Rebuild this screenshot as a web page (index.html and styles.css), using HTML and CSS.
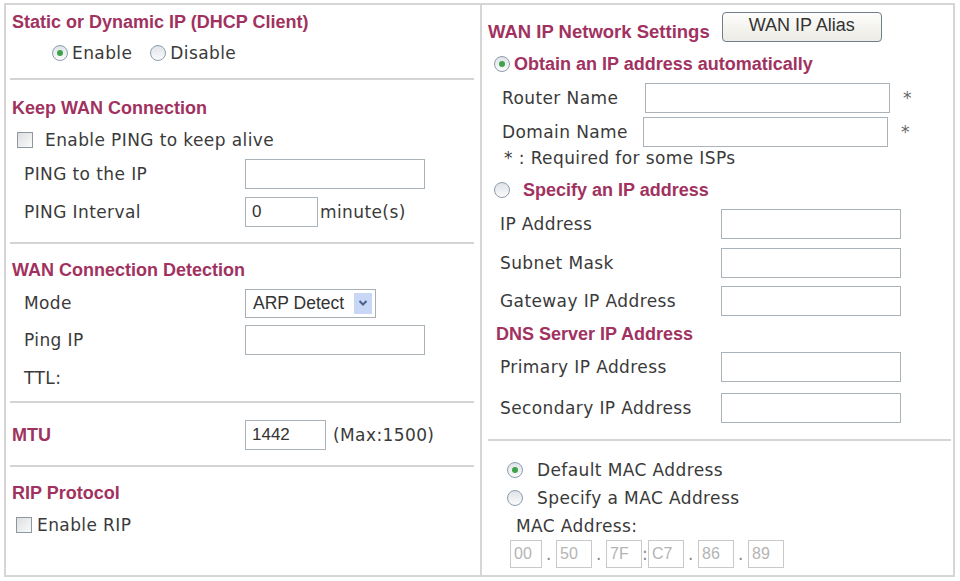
FILE: index.html
```html
<!DOCTYPE html>
<html lang="en">
<head>
  <meta charset="UTF-8"/>
  <title>WAN Settings - DHCP Client</title>
  <link rel="stylesheet" href="styles.css">
</head>
<body>
  <div class="panel">
    <!-- left column: connection options -->
    <div class="col col-left">
      <div class="sec sec-dhcp">
        <div class="title">Static or Dynamic IP (DHCP Client)</div>
        <div class="opts">
          <label class="opt"><span class="radio on"></span>Enable</label>
          <label class="opt"><span class="radio"></span>Disable</label>
        </div>
      </div>
      <hr class="sep">
      <div class="sec sec-keep">
        <div class="title">Keep WAN Connection</div>
        <label class="check-row"><span class="check"></span>Enable PING to keep alive</label>
        <div class="field f-ping">
          <span class="lbl">PING to the IP</span>
          <input type="text" class="inp w180">
        </div>
        <div class="field f-interval">
          <span class="lbl">PING Interval</span>
          <input type="text" class="inp w72" value="0">
          <span class="unit">minute(s)</span>
        </div>
      </div>
      <hr class="sep">
      <div class="sec sec-detect">
        <div class="title">WAN Connection Detection</div>
        <div class="field f-mode">
          <span class="lbl">Mode</span>
          <div class="select">
            <span class="select-val">ARP Detect</span>
            <span class="select-btn">
              <svg width="10" height="8" viewBox="0 0 10 8"><path d="M1.5 2 L5 5.5 L8.5 2" fill="none" stroke="#4a5f8a" stroke-width="2"/></svg>
            </span>
          </div>
        </div>
        <div class="field f-pingip">
          <span class="lbl">Ping IP</span>
          <input type="text" class="inp w180">
        </div>
        <div class="line f-ttl"><span class="lbl">TTL:</span></div>
      </div>
      <hr class="sep">
      <div class="sec sec-mtu">
        <div class="field">
          <span class="lbl title-lbl">MTU</span>
          <input type="text" class="inp w80" value="1442">
          <span class="unit max">(Max:1500)</span>
        </div>
      </div>
      <hr class="sep">
      <div class="sec sec-rip">
        <div class="title">RIP Protocol</div>
        <label class="check-row rip"><span class="check"></span>Enable RIP</label>
      </div>
    </div>

    <!-- right column: WAN IP network settings -->
    <div class="col col-right">
      <div class="sec sec-wan">
        <div class="top-row">
          <div class="title">WAN IP Network Settings</div>
          <button class="btn">WAN IP Alias</button>
        </div>
        <label class="opt opt-title r-obtain"><span class="radio on"></span>Obtain an IP address automatically</label>
        <div class="field f-router">
          <span class="lbl lbl-short">Router Name</span>
          <input type="text" class="inp w244">
          <span class="star">*</span>
        </div>
        <div class="field f-domain">
          <span class="lbl lbl-short">Domain Name</span>
          <input type="text" class="inp w244 nudge">
          <span class="star">*</span>
        </div>
        <div class="line note">* : Required for some ISPs</div>
        <label class="opt opt-title r-specify"><span class="radio"></span>Specify an IP address</label>
        <div class="field f-ip">
          <span class="lbl">IP Address</span>
          <input type="text" class="inp w180">
        </div>
        <div class="field f-mask">
          <span class="lbl">Subnet Mask</span>
          <input type="text" class="inp w180">
        </div>
        <div class="field f-gw">
          <span class="lbl">Gateway IP Address</span>
          <input type="text" class="inp w180">
        </div>
        <div class="title dns">DNS Server IP Address</div>
        <div class="field f-dns1">
          <span class="lbl">Primary IP Address</span>
          <input type="text" class="inp w180">
        </div>
        <div class="field f-dns2">
          <span class="lbl">Secondary IP Address</span>
          <input type="text" class="inp w180">
        </div>
      </div>
      <hr class="sep sep-right">
      <div class="sec sec-mac">
        <label class="opt r-mac1"><span class="radio on"></span>Default MAC Address</label>
        <label class="opt r-mac2"><span class="radio"></span>Specify a MAC Address</label>
        <div class="line mac-lbl">MAC Address:</div>
        <div class="mac">
          <input type="text" class="mac-box first" value="00" disabled>
          <span class="mac-sep">.</span>
          <input type="text" class="mac-box" value="50" disabled>
          <span class="mac-sep">.</span>
          <input type="text" class="mac-box" value="7F" disabled>
          <span class="mac-sep colon">:</span>
          <input type="text" class="mac-box" value="C7" disabled>
          <span class="mac-sep">.</span>
          <input type="text" class="mac-box" value="86" disabled>
          <span class="mac-sep">.</span>
          <input type="text" class="mac-box" value="89" disabled>
        </div>
      </div>
    </div>
  </div>
</body>
</html>
```

FILE: styles.css
```css
body {
  margin: 0;
  background: #fff;
  font-family: "DejaVu Sans", Verdana, sans-serif;
  font-size: 17px;
  letter-spacing: 0.4px;
  color: #3a3a3a;
}
.panel {
  margin: 3px 0 0 4px;
  width: 951px;
  height: 574px;
  box-sizing: border-box;
  border: 2px solid #d6d6d6;
  display: grid;
  grid-template-columns: 476px 1fr;
}
.col-left {
  border-right: 2px solid #d6d6d6;
}
.sec {
  padding: 0 6px;
}
.title {
  font-family: "Liberation Sans", Arial, sans-serif;
  font-weight: bold;
  font-size: 18px;
  letter-spacing: 0;
  color: #a1325f;
  height: 20px;
  line-height: 20px;
  white-space: nowrap;
}
.sep {
  border: 0;
  border-top: 2px solid #d4d4d4;
  margin: 0 6px 0 4px;
  height: 0;
}
.sep-right {
  margin: 16px 2px 0 6px;
}

/* radios and checks */
.opts {
  display: flex;
  margin-top: 11px;
  padding-left: 40px;
  height: 20px;
}
.opt {
  display: flex;
  align-items: center;
  height: 20px;
  white-space: nowrap;
}
.opts .opt + .opt {
  margin-left: 18px;
}
.radio {
  width: 14px;
  height: 14px;
  border: 1px solid #8d9cab;
  border-radius: 50%;
  background: linear-gradient(#dfe3e8, #fbfbfb);
  margin-right: 4px;
  position: relative;
  flex: none;
}
.radio.on::after {
  content: "";
  position: absolute;
  left: 4px;
  top: 4px;
  width: 6px;
  height: 6px;
  border-radius: 50%;
  background: #3da24a;
}
.check-row {
  display: flex;
  align-items: center;
  height: 20px;
  margin-top: 12px;
  padding-left: 5px;
  white-space: nowrap;
}
.check {
  width: 14px;
  height: 14px;
  border: 1px solid #8d979f;
  background: linear-gradient(135deg, #dcdfe2, #fafafa);
  margin-right: 12px;
  flex: none;
}
.check-row.rip {
  padding-left: 4px;
}
.check-row.rip .check {
  margin-right: 5px;
}

/* label + input rows */
.field {
  display: flex;
  align-items: center;
  height: 30px;
}
.line {
  height: 20px;
  line-height: 20px;
  white-space: nowrap;
}
.lbl {
  width: 221px;
  padding-left: 12px;
  flex: none;
  white-space: nowrap;
}
.lbl-short {
  width: 143px;
  padding-left: 14px;
}
.title-lbl {
  width: 233px;
  padding-left: 0;
  font-family: "Liberation Sans", Arial, sans-serif;
  font-weight: bold;
  font-size: 18px;
  letter-spacing: 0;
  color: #a1325f;
}
.inp {
  box-sizing: border-box;
  height: 30px;
  border: 1px solid #aab2ba;
  padding: 0 6px;
  font-family: "Liberation Sans", Arial, sans-serif;
  font-size: 17px;
  color: #333;
  background: #fff;
  outline: none;
}
.w72 { width: 73px; }
.w80 { width: 81px; }
.w180 { width: 180px; }
.w244 { width: 245px; }
.unit {
  margin-left: 2px;
  white-space: nowrap;
}
.unit.max {
  margin-left: 7px;
}

/* left column spacing */
.sec-dhcp { padding-top: 7px; padding-bottom: 15px; }
.sec-keep { padding-top: 18px; padding-bottom: 15px; }
.f-ping { margin-top: 9px; }
.f-interval { margin-top: 8px; }
.sec-detect { padding-top: 16px; padding-bottom: 13px; }
.f-mode { margin-top: 8px; }
.f-pingip { margin-top: 7px; }
.f-ttl { margin-top: 13px; }
.sec-mtu { padding-top: 17px; padding-bottom: 15px; }
.sec-rip { padding-top: 16px; }

.select {
  box-sizing: border-box;
  width: 131px;
  height: 29px;
  border: 1px solid #a6aeb6;
  display: flex;
  align-items: center;
  justify-content: space-between;
  padding: 0 3px 0 7px;
  font-family: "Liberation Sans", Arial, sans-serif;
  font-size: 17.5px;
  letter-spacing: 0;
  color: #333;
}
.select-btn {
  width: 18px;
  height: 21px;
  background: #c8d7f6;
  display: flex;
  align-items: center;
  justify-content: center;
}

/* right column */
.top-row {
  display: flex;
  align-items: center;
  margin-top: 7px;
  height: 30px;
}
.top-row .title {
  padding-top: 10px;
  font-size: 18.5px;
}
.btn {
  margin-left: 12px;
  width: 160px;
  height: 30px;
  border: 1px solid #707d8a;
  border-radius: 4px;
  background: linear-gradient(#fdfdfb, #ecebe4);
  font-family: "Liberation Sans", Arial, sans-serif;
  font-size: 18px;
  color: #333;
  padding: 0 0 4px;
}
.opt-title {
  font-family: "Liberation Sans", Arial, sans-serif;
  font-weight: bold;
  font-size: 18px;
  letter-spacing: 0;
  color: #a1325f;
  padding-left: 6px;
}
.r-obtain { margin-top: 12px; }
.r-specify { margin-top: 12px; }
.r-specify .radio { margin-right: 13px; }
.f-router { margin-top: 9px; }
.f-domain { margin-top: 4px; }
.nudge { margin-left: -2px; }
.star {
  margin-left: 13px;
  color: #666;
}
.note {
  margin-top: 1px;
  padding-left: 16px;
}
.f-ip { margin-top: 9px; }
.f-mask { margin-top: 9px; }
.f-gw { margin-top: 8px; }
.dns {
  margin-top: 8px;
  padding-left: 8px;
}
.f-dns1 { margin-top: 8px; }
.f-dns2 { margin-top: 11px; }

.sec-mac {
  padding-left: 25px;
}
.r-mac1 { margin-top: 19px; }
.r-mac2 { margin-top: 8px; }
.sec-mac .radio { margin-right: 14px; }
.mac-lbl {
  margin-top: 8px;
  padding-left: 9px;
}
.mac {
  display: flex;
  align-items: center;
  margin-top: 4px;
  padding-left: 3px;
}
.mac-box {
  box-sizing: border-box;
  width: 36px;
  height: 28px;
  border: 1px solid #c9c9c9;
  padding: 0 3px;
  font-family: "Liberation Sans", Arial, sans-serif;
  font-size: 16px;
  color: #b4b4b4;
  background: #fff;
}
.mac-box.first {
  width: 32px;
}
.mac-sep {
  width: 14px;
  text-align: center;
  color: #888;
}
.mac-sep.colon {
  width: 6px;
}
```
